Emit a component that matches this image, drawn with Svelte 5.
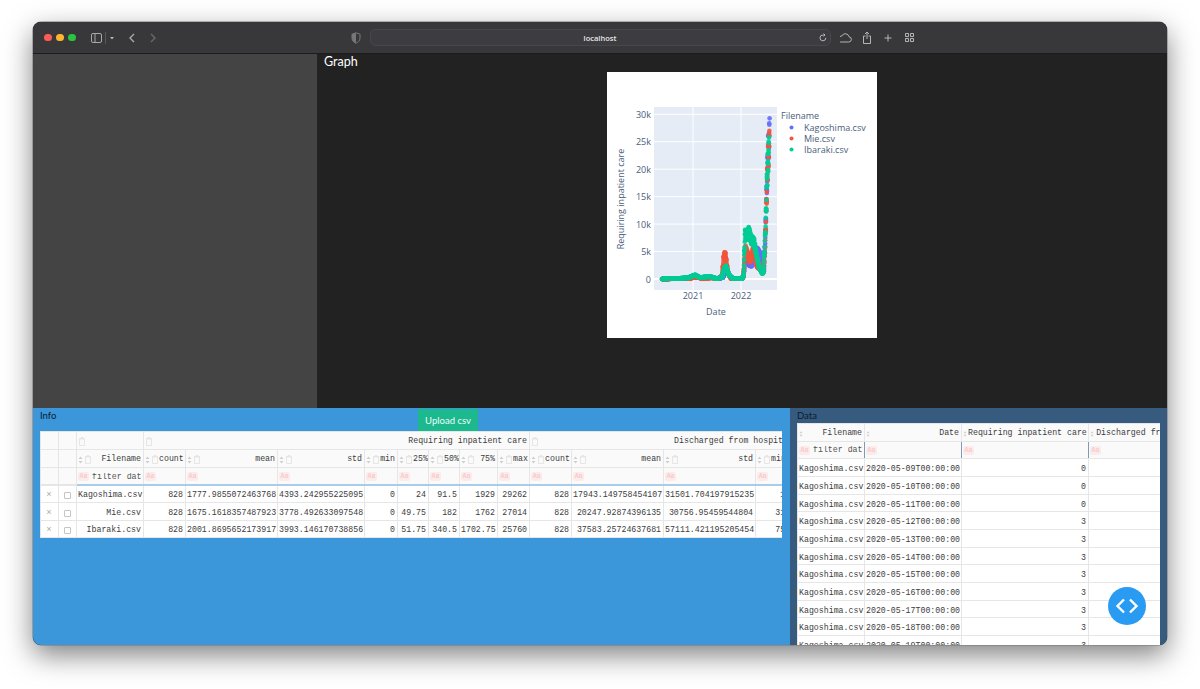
<script>
    const infoCols = [18, 18, 67, 42, 92, 87, 33, 31, 31, 38, 32, 42, 92, 92, 32];
    const infoHeaders = ["Filename", "count", "mean", "std", "min", "25%", "50%", "75%", "max", "count", "mean", "std", "min"];
    const infoRows = [
        ["Kagoshima.csv", "828", "1777.9855072463768", "4393.242955225095", "0", "24", "91.5", "1929", "29262", "828", "17943.149758454107", "31501.704197915235", "1"],
        ["Mie.csv", "828", "1675.1618357487923", "3778.492633097548", "0", "49.75", "182", "1762", "27014", "828", "20247.92874396135", "30756.95459544804", "31"],
        ["Ibaraki.csv", "828", "2001.8695652173917", "3993.146170738856", "0", "51.75", "340.5", "1702.75", "25760", "828", "37583.25724637681", "57111.421195205454", "75"],
    ];

    const dataCols = [67, 97, 127, 129];
    const dataHeaders = ["Filename", "Date", "Requiring inpatient care", "Discharged from hospital"];
    const dataRows = [
        ["09", 0], ["10", 0], ["11", 0], ["12", 3], ["13", 3], ["14", 3],
        ["15", 3], ["16", 3], ["17", 3], ["18", 3], ["19", 3],
    ];

    // plot geometry, relative to the white figure
    const y0 = 207;
    const yScale = 27.45 / 5000;
    const yOf = (v) => y0 - v * yScale;
    const yTicks = [
        [0, "0"], [5000, "5k"], [10000, "10k"], [15000, "15k"],
        [20000, "20k"], [25000, "25k"], [30000, "30k"],
    ];
    const xTicks = [[86, "2021"], [134, "2022"]];

    const curves = [
        {
            color: "#636efa",
            pts: [[662, 0], [690, 150], [696, 500], [702, 200], [712, 300], [718, 60], [723, 300], [725, 1500], [727, 1800], [730, 500], [734, 40], [742, 40], [743.5, 500], [745, 3500], [747, 4200], [749, 3000], [752, 2800], [754, 4500], [757, 5800], [760, 5000], [762, 3000], [764, 1500], [765, 7000], [766, 13000], [767, 20000], [768, 25500], [769, 28000], [769.6, 29262]],
        },
        {
            color: "#ef553b",
            pts: [[662, 0], [690, 120], [696, 450], [702, 100], [712, 250], [718, 40], [722, 600], [724, 4900], [725.5, 4800], [728, 1200], [731, 100], [742, 40], [743.5, 900], [745.5, 6200], [748, 4800], [750, 3500], [753, 5800], [755, 4800], [757, 2600], [760, 2200], [763, 1200], [765, 6000], [766, 12000], [767, 19000], [768, 24000], [769, 26500], [769.4, 27014]],
        },
        {
            color: "#00cc96",
            pts: [[662, 0], [676, 100], [688, 250], [695, 800], [700, 300], [710, 500], [716, 100], [722, 300], [724, 2000], [726, 2500], [729, 800], [733, 50], [742, 50], [743.5, 800], [745, 9000], [747, 8800], [749, 9600], [751, 8000], [754, 7500], [756, 5500], [759, 2500], [762, 1200], [763.5, 1300], [765, 8000], [766, 13000], [767, 20000], [768, 24000], [769, 25760]],
        },
    ];

    function sample(pts) {
        const out = [];
        const first = pts[0][0];
        const last = pts[pts.length - 1][0];
        let k = 0;
        for (let i = 0; i < 828; i++) {
            const x = first + ((last - first) * i) / 827;
            while (k < pts.length - 2 && pts[k + 1][0] < x) k++;
            const [ax, av] = pts[k];
            const [bx, bv] = pts[k + 1];
            const v = av + ((bv - av) * (x - ax)) / (bx - ax);
            // weekly wobble
            const wobble = i === 827 ? 1 : 1 - 0.1 * (1 + Math.sin((i * 2 * Math.PI) / 7));
            out.push([x - 607, yOf(v * wobble)]);
        }
        return out;
    }
    const series = curves.map((c) => ({ color: c.color, points: sample(c.pts) }));
    const legend = [
        ["Kagoshima.csv", "#636efa", 59],
        ["Mie.csv", "#ef553b", 70],
        ["Ibaraki.csv", "#00cc96", 81],
    ];
</script>

{#snippet sort()}
    <svg class="sort" width="5" height="8" viewBox="0 0 5 8"><path d="M2.5 0.5 4.5 3H0.5ZM2.5 7.5 0.5 5H4.5Z" /></svg>
{/snippet}

{#snippet trash()}
    <svg class="trash" width="6" height="9" viewBox="0 0 6 9"><path d="M.5 2H5.500V8.500H.5ZM0 1.500H6M2 1.500V.5H4V1.500" /></svg>
{/snippet}

{#snippet pill()}
    <span class="pill">Aa</span>
{/snippet}

<div class="page">
    <div class="window">
        <header class="toolbar">
            <span class="lights"><i class="red"></i><i class="amber"></i><i class="green"></i></span>
            <svg class="tool-left" width="66" height="14" viewBox="0 0 66 14">
                <rect x="0.5" y="2.5" width="10" height="9" rx="1.5" />
                <path d="M4 2.5V11.5" />
                <path class="dim" d="M14.5 1V13" />
                <path class="solid" d="M19 6H23L21 8.5Z" />
                <path class="thick" d="M43 3 39 7 43 11" />
                <path class="thick faded" d="M60 3 64 7 60 11" />
            </svg>
            <svg class="shield" width="10" height="12" viewBox="0 0 10 12">
                <path d="M5 .8 9 2.2V6C9 8.8 7 10.4 5 11.2 3 10.4 1 8.8 1 6V2.2Z" fill="none" stroke="#77767a" />
                <path d="M5 .8V11.2C3 10.4 1 8.8 1 6V2.2Z" fill="#77767a" />
            </svg>
            <div class="url">
                <span>localhost</span>
                <svg width="8" height="9" viewBox="0 0 8 9"><path d="M6.8 4.8A2.9 2.9 0 1 1 4 2H5.5M4.6.6 6 2 4.6 3.4" /></svg>
            </div>
            <svg class="tool-right" width="76" height="14" viewBox="0 0 76 14">
                <path d="M.5 11H8.500A2.600 2.600 0 0 0 9 5.800 3.800 3.800 0 0 0 1.800 5 3.100 3.100 0 0 0 .5 11Z" />
                <path d="M25.500 5H23.500V12.500H30.500V5H28.500M27 8V1M25 3 27 1 29 3" />
                <path d="M48 3.500V10.500M44.500 7H51.500" />
                <path d="M65.500 2.500H68.500V5.500H65.500ZM70.500 2.500H73.500V5.500H70.500ZM65.500 7.500H68.500V10.500H65.500ZM70.500 7.500H73.500V10.500H70.500Z" />
            </svg>
        </header>

        <div class="top">
            <aside class="sidebar"></aside>
            <section class="graph">
                <h2>Graph</h2>
                <svg class="figure" width="270" height="266" viewBox="0 0 270 266">
                    <rect width="270" height="266" fill="#fff" />
                    <rect x="47" y="35" width="123" height="183" fill="#e5ecf6" />
                    {#each yTicks as [v, label]}
                        <line x1="47" x2="170" y1={yOf(v)} y2={yOf(v)} stroke="#fff" stroke-width={v === 0 ? 2 : 1} />
                        <text class="tick" x="44" y={yOf(v) + 3.5} text-anchor="end">{label}</text>
                    {/each}
                    {#each xTicks as [x, label]}
                        <line x1={x} x2={x} y1="35" y2="218" stroke="#fff" />
                        <text class="tick" x={x} y="227" text-anchor="middle">{label}</text>
                    {/each}
                    {#each series as s}
                        <g fill={s.color} fill-opacity="0.9">
                            {#each s.points as [x, y]}
                                <circle cx={x} cy={y} r="2.300" />
                            {/each}
                        </g>
                    {/each}
                    <text class="tick" x="109" y="243" text-anchor="middle">Date</text>
                    <text class="tick" transform="translate(17 127) rotate(-90)" text-anchor="middle">Requiring inpatient care</text>
                    <text class="tick" x="174" y="47">Filename</text>
                    {#each legend as [name, color, y]}
                        <circle cx="184.500" cy={y - 3.5} r="2" fill={color} />
                        <text class="tick" x="197" y={y}>{name}</text>
                    {/each}
                </svg>
            </section>
        </div>

        <div class="bottom">
            <section class="info">
                <div class="info-head">
                    <span class="label">Info</span>
                    <button class="upload">Upload csv</button>
                </div>
                <div class="table-clip info-clip">
                    <table>
                        <colgroup>
                            {#each infoCols as w}<col style="width: {w}px" />{/each}
                        </colgroup>
                        <thead>
                            <tr>
                                <th></th>
                                <th></th>
                                <th><div class="head">{@render trash()}</div></th>
                                <th colspan="8"><div class="head">{@render trash()}<span>Requiring inpatient care</span></div></th>
                                <th colspan="4"><div class="head">{@render trash()}<span class="spill">Discharged from hospital</span></div></th>
                            </tr>
                            <tr>
                                <th></th>
                                <th></th>
                                {#each infoHeaders as h}
                                    <th><div class="head">{@render sort()}{@render trash()}<span>{h}</span></div></th>
                                {/each}
                            </tr>
                            <tr class="filters">
                                <th></th>
                                <th></th>
                                {#each infoHeaders as h, i}
                                    <th><div class="head">{@render pill()}{#if i === 0}<span class="placeholder">filter data...</span>{/if}</div></th>
                                {/each}
                            </tr>
                        </thead>
                        <tbody>
                            {#each infoRows as row}
                                <tr>
                                    <td class="del">×</td>
                                    <td class="check"><input type="checkbox" /></td>
                                    {#each row as cell}<td>{cell}</td>{/each}
                                </tr>
                            {/each}
                        </tbody>
                    </table>
                </div>
            </section>

            <section class="data">
                <span class="label">Data</span>
                <div class="table-clip data-clip">
                    <table>
                        <colgroup>
                            {#each dataCols as w}<col style="width: {w}px" />{/each}
                        </colgroup>
                        <thead>
                            <tr>
                                {#each dataHeaders as h}
                                    <th><div class="head">{@render sort()}<span>{h}</span></div></th>
                                {/each}
                            </tr>
                            <tr class="filters">
                                {#each dataHeaders as h, i}
                                    <th class="active"><div class="head">{@render pill()}{#if i === 0}<span class="placeholder">filter data...</span>{/if}</div></th>
                                {/each}
                            </tr>
                        </thead>
                        <tbody>
                            {#each dataRows as [day, value]}
                                <tr>
                                    <td>Kagoshima.csv</td>
                                    <td>2020-05-{day}T00:00:00</td>
                                    <td>{value}</td>
                                    <td></td>
                                </tr>
                            {/each}
                        </tbody>
                    </table>
                </div>
            </section>

            <button class="fab" aria-label="Toggle debug">
                <svg width="24" height="16" viewBox="0 0 24 16"><path d="M9 1.500 2.500 8 9 14.500M15 1.500 21.500 8 15 14.500" /></svg>
            </button>
        </div>
    </div>
</div>

<style>
    :global(body) {
        background: #fff;
    }
    .page {
        box-sizing: border-box;
        height: 689px;
        padding: 22px 33px 44px;
        font-family: Lato, "Liberation Sans", sans-serif;
    }
    .window {
        position: relative;
        height: 623px;
        display: flex;
        flex-direction: column;
        overflow: hidden;
        border-radius: 8px;
        background: #222;
        box-shadow: 0 0 0 0.5px #77767a, 0 10px 28px rgba(0, 0, 0, 0.5);
    }

    .toolbar {
        flex: none;
        box-sizing: border-box;
        height: 32px;
        display: flex;
        align-items: center;
        padding-left: 11px;
        background: #38373a;
        border-bottom: 1px solid #1c1c1c;
    }
    .lights {
        display: flex;
        gap: 4.500px;
    }
    .lights i {
        width: 7.500px;
        height: 7.500px;
        border-radius: 50%;
    }
    .red { background: #fb5c55; }
    .amber { background: #fcb52c; }
    .green { background: #28c53e; }
    .tool-left {
        margin-left: 15px;
        fill: none;
        stroke: #a9a8ab;
    }
    .tool-left .dim { stroke: #58575a; }
    .tool-left .solid { fill: #b5b4b7; stroke: none; }
    .tool-left .thick { stroke-width: 1.4; }
    .tool-left .faded { stroke: #6a696c; }
    .shield {
        margin-left: 194px;
    }
    .url {
        box-sizing: border-box;
        width: 461px;
        height: 17px;
        margin-left: 9px;
        display: flex;
        align-items: center;
        justify-content: center;
        position: relative;
        border: 1px solid #48474b;
        border-radius: 5px;
        background: #3d3c40;
        color: #e8e8e8;
        font: 600 7.500px "Open Sans", sans-serif;
    }
    .url svg {
        position: absolute;
        right: 3px;
        top: 3px;
        fill: none;
        stroke: #b5b4b7;
    }
    .tool-right {
        margin-left: 9px;
        fill: none;
        stroke: #b5b4b7;
    }

    .top {
        flex: none;
        height: 354px;
        display: flex;
    }
    .sidebar {
        flex: none;
        width: 284px;
        background: #444;
    }
    .graph {
        flex: 1;
        display: flex;
        flex-direction: column;
        align-items: center;
        background: #222;
    }
    .graph h2 {
        align-self: stretch;
        height: 18px;
        margin: 0;
        padding-left: 7px;
        color: #fff;
        font-size: 12.500px;
        font-weight: 400;
        line-height: 15px;
    }
    .tick {
        fill: #4a5d7c;
        font: 9px "Open Sans", sans-serif;
    }

    .bottom {
        flex: 1;
        min-height: 0;
        display: flex;
    }
    .info {
        flex: none;
        width: 757px;
        background: #3b97d9;
    }
    .info-head {
        height: 23px;
        display: flex;
        padding-left: 7px;
    }
    .label {
        display: block;
        color: #0a1c30;
        font-size: 9.500px;
        line-height: 14px;
        padding-top: 1px;
    }
    .info-head .label {
        width: 378px;
    }
    .upload {
        box-sizing: border-box;
        width: 60px;
        height: 22px;
        margin-top: 1px;
        padding: 0;
        border: 0;
        background: #1cb98f;
        color: #f2fbf8;
        font: 9.500px Lato, sans-serif;
    }
    .data {
        flex: 1;
        min-width: 0;
        padding-left: 7px;
        background: #375a7f;
    }
    .table-clip {
        overflow: hidden;
        background: #fff;
    }
    .info-clip {
        width: 742px;
        margin-left: 7px;
    }
    .data-clip {
        width: 363px;
    }

    table {
        border-collapse: collapse;
        table-layout: fixed;
        width: 0;
        color: #3c3c3c;
        font: 8.250px/1 "Liberation Mono", monospace;
    }
    th,
    td {
        box-sizing: border-box;
        height: 18px;
        padding: 2px 2px 0 1px;
        border: 1px solid #e6e6e6;
        text-align: right;
        white-space: nowrap;
        overflow: hidden;
    }
    .info-clip td {
        padding-top: 3px;
    }
    .data-clip td {
        padding-top: 4px;
    }
    .data-clip .filters th {
        padding-top: 1px;
    }
    tbody tr:nth-child(3n) td {
        height: 17px;
    }
    .filters th {
        height: 17px;
    }
    th {
        background: #fafafa;
        font-weight: 400;
    }
    .table-clip td {
        background: #fff;
    }
    .head {
        display: flex;
        align-items: center;
        gap: 1px;
        min-width: 0;
    }
    .head span {
        flex: none;
        margin-left: auto;
    }
    .head span.pill {
        margin-left: 0;
    }
    .head span.spill {
        margin-left: 135px;
    }
    .head span.placeholder {
        flex: 1;
        min-width: 0;
        margin-left: 2px;
        overflow: hidden;
        text-align: left;
        color: #555;
    }
    .sort {
        flex: none;
        fill: #cfcfcf;
    }
    .data-clip .sort {
        width: 4px;
    }
    .trash {
        flex: none;
        margin-left: 1px;
        fill: none;
        stroke: #e6e6e6;
    }
    .pill {
        flex: none;
        box-sizing: border-box;
        width: 11px;
        height: 9px;
        border-radius: 2px;
        background: #fdeaea;
        color: #f4c4c4;
        font-size: 6.500px;
        line-height: 9px;
        text-align: center;
    }
    .filters th {
        border-bottom: 2px solid #a8cde9;
    }
    .filters th:nth-child(-n + 2) {
        border-bottom-color: #e6e6e6;
    }
    .data-clip .filters th {
        border-bottom: 1px solid #e6e6e6;
    }
    .data-clip .filters .active {
        border-right: 1px solid #7e9ab9;
    }
    .del {
        color: #aaa;
        font-size: 9px;
        text-align: center;
    }
    .check {
        text-align: center;
    }
    .check input {
        appearance: none;
        display: block;
        width: 7px;
        height: 7px;
        margin: 0 auto;
        border: 1px solid #c4c4c4;
        border-radius: 1px;
        background: #fff;
    }
    .fab {
        position: absolute;
        right: 21px;
        bottom: 20px;
        width: 38px;
        height: 38px;
        padding: 0;
        display: flex;
        align-items: center;
        justify-content: center;
        border: 0;
        border-radius: 50%;
        background: #2a9bf2;
    }
    .fab svg {
        fill: none;
        stroke: #fff;
        stroke-width: 2.400;
    }
</style>
